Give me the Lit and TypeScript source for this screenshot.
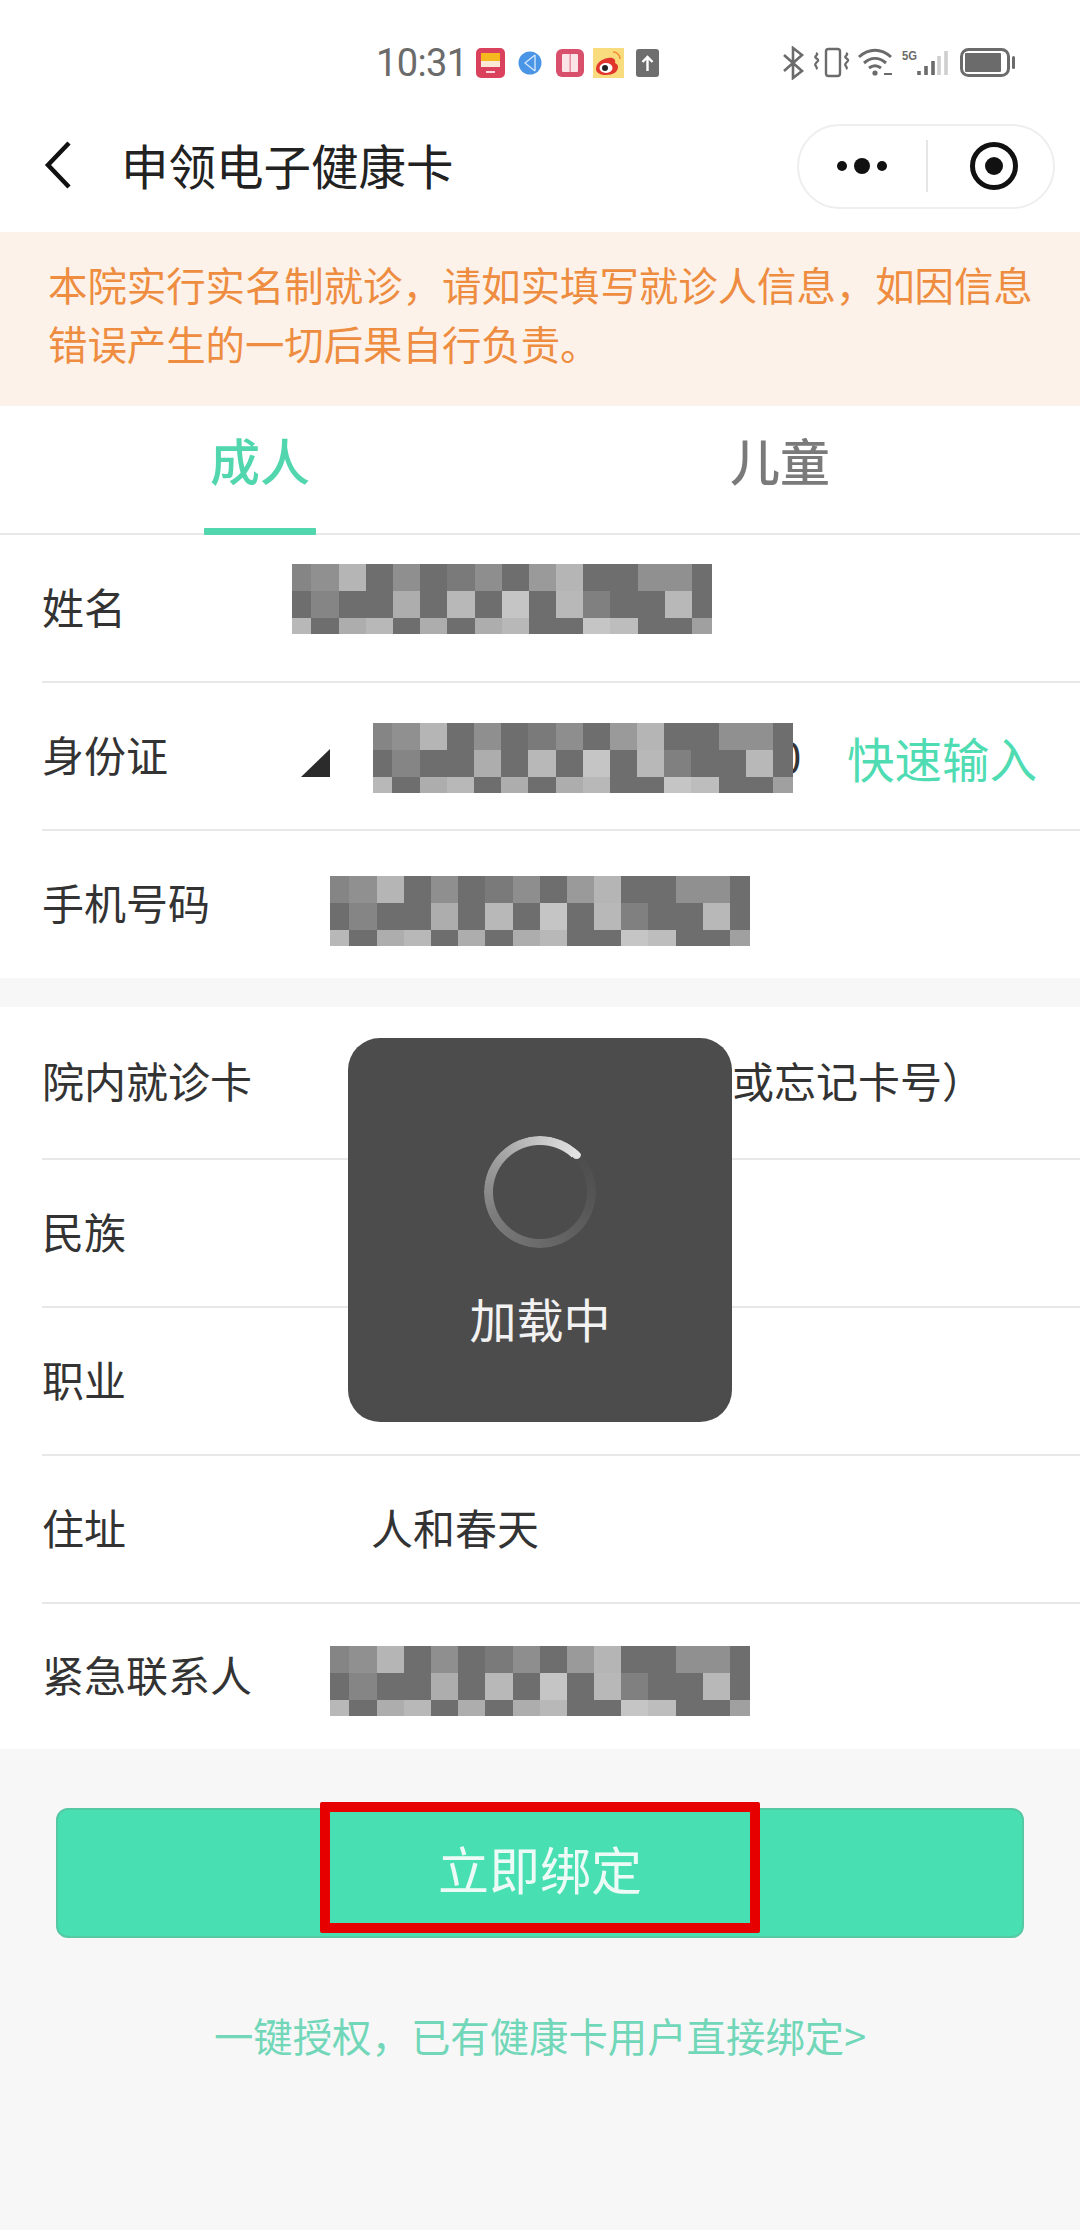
import { LitElement, html, css } from "lit";
import { customElement } from "lit/decorators.js";

const D = "#6e6e6e";
const GRID = [
  ["#858585", "#909090", "#b5b5b5", D, "#8f8f8f", D, "#7a7a7a", "#8e8e8e", D, "#9a9a9a", "#b5b5b5", D, D, "#909090", "#909090", D],
  [D, "#858585", D, D, "#adadad", D, "#b8b8b8", D, "#c5c5c5", D, "#b8b8b8", "#808080", D, D, "#b8b8b8", D],
  ["#b8b8b8", D, "#adadad", "#b8b8b8", D, "#adadad", D, "#adadad", "#b8b8b8", D, D, "#c5c5c5", "#bdbdbd", D, D, "#a0a0a0"],
];

@customElement("app-root")
export class AppRoot extends LitElement {
  static styles = css`
    :host { display: block; position: relative; width: 1080px; height: 2230px; background: #f7f7f7; overflow: hidden;
      font-family: "Noto Sans CJK SC", "Noto Sans", sans-serif; color: #333; }
    .top { background: #fff; }
    .status { height: 100px; display: flex; align-items: center; padding: 0 65px 0 376px; box-sizing: border-box; color: #6b6b6b; }
    .time { font-family: Roboto, sans-serif; font-size: 38px; line-height: 1; width: 100px; margin-top: 26px; letter-spacing: -0.6px; }
    .sicons, .ricons { display: flex; align-items: center; margin-top: 26px; }
    .sicons svg { display: block; }
    .ricons { margin-left: auto; }
    .s5g { font-family: "Liberation Sans", sans-serif; font-size: 13px; font-weight: 700; fill: #6b6b6b; stroke: none; }
    .nav { height: 132px; display: flex; align-items: center; padding: 0 25px 0 44px; box-sizing: border-box; }
    .back { display: block; margin-top: -3px; }
    .title { font-size: 47.5px; color: #222; margin-left: 49px; line-height: 60px; margin-top: -2px; }
    .capsule { margin-left: auto; width: 258px; height: 85px; border: 2px solid #eeeeee; border-radius: 43px; box-sizing: border-box; display: flex; align-items: center; }
    .dots { width: 125px; margin-right: 2px; display: flex; align-items: center; justify-content: center; gap: 7px; }
    .dots i { display: block; width: 10px; height: 10px; border-radius: 50%; background: #111; }
    .dots i.big { width: 16px; height: 16px; }
    .sep { width: 2px; height: 52px; background: #e6e6e6; }
    .target { flex: 1; display: flex; justify-content: center; padding-left: 6px; }
    .notice { background: #fcf2ea; height: 174px; padding: 22px 20px 0 48px; box-sizing: border-box; color: #ee8c40; font-size: 39.4px; line-height: 59px; white-space: nowrap; }
    .tabs { display: flex; background: #fff; height: 129px; padding-right: 40px; border-bottom: 2px solid #e8e8e8; box-sizing: border-box; }
    .tab { flex: 1; display: flex; justify-content: center; font-size: 50px; font-weight: 500; line-height: 62px; padding-top: 22px; color: #7a7a7a; position: relative; }
    .tab.on { color: #52d6ad; }
    .tab.on::after { content: ""; position: absolute; left: 204px; width: 112px; bottom: -2px; height: 7px; background: #52d6ad; border-radius: 1px; }
    .sec { background: #fff; padding-left: 42px; }
    .sec1 { margin-bottom: 29px; }
    .row { position: relative; display: flex; align-items: center; height: 148px; padding-bottom: 6px; box-sizing: border-box; border-bottom: 2px solid #e8e8e8; font-size: 42px; color: #333; }
    .row.first { height: 153px; }
    .row.end1 { height: 147px; border-bottom: none; }
    .row.end2 { height: 145px; border-bottom: none; }
    .label { white-space: nowrap; }
    .addr { position: absolute; left: 329px; }
    .hint { position: absolute; left: 690px; white-space: nowrap; }
    .id0 { position: absolute; left: 736px; top: 42px; line-height: 60px; }
    .quick { position: absolute; left: 805px; top: 45px; font-size: 47.5px; line-height: 60px; color: #4fdcb2; white-space: nowrap; }
    .tri { position: absolute; left: 259px; top: 66px; width: 29px; height: 28px; }
    .mosaic { position: absolute; width: 420px; height: 70px; display: grid; grid-template-columns: 19.4px repeat(14, 27.2px) 20px; grid-template-rows: 27px 27px 16px; }
    .m1 { left: 250px; top: 29px; }
    .m2 { left: 331px; top: 40px; }
    .m3 { left: 288px; top: 45px; }
    .m4 { left: 288px; top: 42px; }
    .foot { padding: 59px 56px 0; }
    .btn { position: relative; height: 130px; padding-bottom: 10px; background: #48dfb3; border: 2px solid #55c8a4; border-radius: 12px; box-sizing: border-box; color: #ecfbf6; font-size: 51px; display: flex; align-items: center; justify-content: center; }
    .mark { position: absolute; left: 262px; top: -8px; width: 440px; height: 131px; border: 10px solid #e60000; box-sizing: border-box; border-radius: 2px; }
    .link { margin-top: 72px; margin-left: -20px; margin-right: -20px; text-align: center; font-size: 39.4px; line-height: 50px; color: #72d7b9; white-space: nowrap; }
    .toast { position: absolute; left: 348px; top: 1038px; width: 384px; height: 384px; border-radius: 32px; background: #4c4c4c; display: flex; flex-direction: column; align-items: center; color: #f2f2f2; font-size: 47px; }
    .spin { position: relative; width: 112px; height: 112px; margin-top: 98px; border-radius: 50%;
      background: conic-gradient(from 43deg, #4c4c4c 0deg, #565656 60deg, #686868 130deg, #7c7c7c 200deg, #9c9c9c 260deg, #c8c8c8 320deg, #e2e2e2 360deg);
      -webkit-mask: radial-gradient(circle closest-side, transparent 46.5px, #000 47.5px);
      mask: radial-gradient(circle closest-side, transparent 46.5px, #000 47.5px); }
    .tip { position: absolute; left: 87.5px; top: 13.5px; width: 9px; height: 9px; border-radius: 50%; background: #e2e2e2; }
    .toast span { margin-top: 40px; line-height: 60px; }
  `;

  private mosaic(cls: string) {
    return html`<div class="mosaic ${cls}" aria-hidden="true">
      ${GRID.flat().map((c) => html`<i style="background:${c}"></i>`)}
    </div>`;
  }

  private leftIcons() {
    return html`<div class="sicons">
      <svg width="200" height="32" viewBox="0 0 200 32">
        <rect x="0" y="1" width="29" height="30" rx="5" fill="#d9415c"/>
        <rect x="5" y="6" width="19" height="8" fill="#f5b81f"/>
        <rect x="5" y="14" width="19" height="6" fill="#fbe9d6"/>
        <rect x="10" y="24" width="9" height="2" fill="#fbd6dc"/>
        <circle cx="54" cy="16" r="11.5" fill="#4a95e6"/>
        <path d="M59 8 49 16 59 24M59 8V24" stroke="#cfe4fb" stroke-width="1.4" fill="none"/>
        <rect x="80" y="2" width="28" height="28" rx="6" fill="#d9506c"/>
        <rect x="86" y="7" width="16" height="18" rx="1" fill="#fbe4e8"/>
        <rect x="93.5" y="7" width="1.4" height="18" fill="#e3889a"/>
        <rect x="117" y="1" width="31" height="30" fill="#f9dc7e"/>
        <path d="M132 11c-7 1-12 6-12 11 0 4 5 6 10 6 7 0 12-3 12-8 0-3-3-4-3-4 1-3-1-6-7-5z" fill="#e0362c"/>
        <ellipse cx="130" cy="21" rx="6.5" ry="5" fill="#fff"/>
        <circle cx="129" cy="21" r="3" fill="#222"/>
        <path d="M137 5c4 0 7 3 7 7" stroke="#f09030" stroke-width="1.6" fill="none"/>
        <rect x="160" y="2" width="23" height="28" rx="3" fill="#6e6e6e"/>
        <path d="M171.5 24V10M166.5 15l5-5 5 5" stroke="#fff" stroke-width="2.4" fill="none"/>
      </svg>
    </div>`;
  }

  private rightIcons() {
    return html`<div class="ricons">
      <svg width="232" height="34" viewBox="0 0 232 34" fill="none" stroke="#6b6b6b">
        <path d="M1 9 19 25 10 32V2l9 7L1 25" stroke-width="2.6"/>
        <rect x="43" y="3" width="14" height="27" rx="2.5" stroke-width="2.4"/>
        <path d="M33 7c4 2-3 3 0 5s3 2 0 5 3 4 0 6M63 7c4 2-3 3 0 5s3 2 0 5 3 4 0 6" stroke-width="2.2"/>
        <path d="M76 11c10-9 22-9 32 0M81 17c7-6 15-6 22 0M86 22c4-3 8-3 12 0" stroke-width="3"/>
        <circle cx="92" cy="27" r="2.6" fill="#6b6b6b" stroke="none"/>
        <path d="M101 28h8" stroke-width="2"/>
        <text class="s5g" x="119" y="14" textLength="15" lengthAdjust="spacingAndGlyphs">5G</text>
        <path d="M136 29v-4M143 29v-9M150 29V15" stroke-width="3.6"/>
        <path d="M156 29V10M163 29V5" stroke="#cfcfcf" stroke-width="3.6"/>
        <rect x="178.5" y="3.5" width="47" height="26" rx="7" stroke-width="3"/>
        <rect x="182" y="7" width="36" height="19" rx="1" fill="#6b6b6b" stroke="none"/>
        <rect x="229" y="10" width="3" height="13" rx="1.5" fill="#6b6b6b" stroke="none"/>
      </svg>
    </div>`;
  }

  render() {
    return html`
      <div class="top">
        <div class="status">
          <div class="time">10:31</div>
          ${this.leftIcons()}
          ${this.rightIcons()}
        </div>
        <div class="nav">
          <svg class="back" width="28" height="50" viewBox="0 0 28 50" fill="none"><path d="M25 3 4 25l21 22" stroke="#111" stroke-width="4.5"/></svg>
          <div class="title">申领电子健康卡</div>
          <div class="capsule">
            <div class="dots"><i></i><i class="big"></i><i></i></div>
            <div class="sep"></div>
            <div class="target">
              <svg width="50" height="50" viewBox="0 0 50 50"><circle cx="25" cy="25" r="21.5" fill="none" stroke="#111" stroke-width="5"/><circle cx="25" cy="25" r="9" fill="#111"/></svg>
            </div>
          </div>
        </div>
      </div>
      <div class="notice">本院实行实名制就诊，请如实填写就诊人信息，如因信息<br />错误产生的一切后果自行负责。</div>
      <div class="tabs">
        <div class="tab on">成人</div>
        <div class="tab">儿童</div>
      </div>
      <div class="sec sec1">
        <div class="row"><span class="label">姓名</span>${this.mosaic("m1")}</div>
        <div class="row">
          <span class="label">身份证</span>
          <svg class="tri" viewBox="0 0 29 28"><path d="M29 0V28H0Z" fill="#2b2b2b"/></svg>
          <span class="id0">0</span>
          ${this.mosaic("m2")}
          <span class="quick">快速输入</span>
        </div>
        <div class="row end1"><span class="label">手机号码</span>${this.mosaic("m3")}</div>
      </div>
      <div class="sec">
        <div class="row first"><span class="label">院内就诊卡</span><span class="hint">或忘记卡号）</span></div>
        <div class="row"><span class="label">民族</span></div>
        <div class="row"><span class="label">职业</span></div>
        <div class="row"><span class="label">住址</span><span class="addr">人和春天</span></div>
        <div class="row end2"><span class="label">紧急联系人</span>${this.mosaic("m4")}</div>
      </div>
      <div class="foot">
        <div class="btn">立即绑定<div class="mark"></div></div>
        <div class="link">一键授权，已有健康卡用户直接绑定&gt;</div>
      </div>
      <div class="toast">
        <div class="spin"><div class="tip"></div></div>
        <span>加载中</span>
      </div>
    `;
  }
}
